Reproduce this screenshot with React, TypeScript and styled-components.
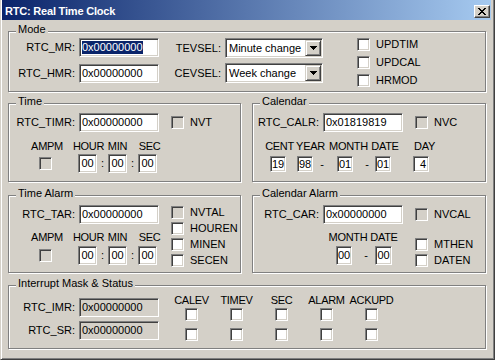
import React from 'react';
import styled, { createGlobalStyle } from 'styled-components';

const FACE = '#D4D0C8';

const GlobalStyle = createGlobalStyle`
  html, body {
    margin: 0;
    padding: 0;
    background: #fff;
  }
  body {
    font-family: "Liberation Sans", Arial, sans-serif;
    font-size: 11px;
    color: #000;
  }
  * {
    box-sizing: border-box;
  }
`;

const Window = styled.div`
  width: 495px;
  height: 360px;
  display: flex;
  flex-direction: column;
  background: ${FACE};
  border-left: 1px solid ${FACE};
  border-right: 1px solid #404040;
  border-bottom: 1px solid #404040;
  box-shadow: inset 1px 0 #fff, inset -1px -1px #808080;
  padding: 0 3px 3px 1px;
`;

const TitleBar = styled.div`
  height: 20px;
  display: flex;
  align-items: flex-start;
  justify-content: space-between;
  padding: 0 1px 0 3px;
  background: linear-gradient(to right, #0a246a, #a6caf0);
`;

const TitleText = styled.span`
  margin-top: 5px;
  line-height: 13px;
  color: #fff;
  font-weight: bold;
  letter-spacing: -0.2px;
`;

const CloseButton = styled.div`
  width: 16px;
  height: 13px;
  margin-top: 5px;
  display: flex;
  align-items: center;
  justify-content: center;
  background: ${FACE};
  border: 1px solid;
  border-color: #fff #404040 #404040 #fff;
  box-shadow: inset -1px -1px #808080;
`;

const Body = styled.div`
  padding: 11px 0 0 6px;
  display: flex;
  flex-direction: column;
`;

const GroupRow = styled.div<{ $mt?: number }>`
  display: grid;
  grid-template-columns: 233px 234px;
  column-gap: 11px;
  margin-top: ${p => p.$mt ?? 0}px;
`;

const Group = styled.div<{ $h: number; $w?: number; $mt?: number }>`
  position: relative;
  width: ${p => (p.$w ? `${p.$w}px` : 'auto')};
  height: ${p => p.$h}px;
  margin-top: ${p => p.$mt ?? 0}px;
  border: 1px solid #808080;
  box-shadow: inset 1px 1px #fff, 1px 1px #fff;
`;

const GroupTitle = styled.span`
  position: absolute;
  top: -9px;
  left: 7px;
  padding: 0 2px;
  line-height: 13px;
  background: ${FACE};
  white-space: nowrap;
`;

const GroupBody = styled.div<{ $pt: number }>`
  padding-top: ${p => p.$pt}px;
  display: flex;
  flex-direction: column;
`;

const Row = styled.div<{ $mt?: number; $ml?: number; $top?: boolean }>`
  display: flex;
  align-items: ${p => (p.$top ? 'flex-start' : 'center')};
  margin-top: ${p => p.$mt ?? 0}px;
  margin-left: ${p => p.$ml ?? 0}px;
`;

const Column = styled.div<{ $w?: number; $ml?: number; $mt?: number; $gap?: number }>`
  display: flex;
  flex-direction: column;
  flex-shrink: 0;
  width: ${p => (p.$w ? `${p.$w}px` : 'auto')};
  margin-left: ${p => p.$ml ?? 0}px;
  margin-top: ${p => p.$mt ?? 0}px;
  gap: ${p => p.$gap ?? 0}px;
`;

const FieldLabel = styled.span<{ $w?: number }>`
  width: ${p => p.$w ?? 66}px;
  margin-right: 4px;
  flex-shrink: 0;
  text-align: right;
  line-height: 13px;
  white-space: nowrap;
`;

type Align = 'left' | 'center' | 'right';

const Edit = styled.div<{ $w: number; $h?: number; $ml?: number; $align?: Align; $disabled?: boolean }>`
  width: ${p => p.$w}px;
  height: ${p => p.$h ?? 19}px;
  margin-left: ${p => p.$ml ?? 0}px;
  flex-shrink: 0;
  display: flex;
  align-items: center;
  justify-content: ${p =>
    p.$align === 'center' ? 'center' : p.$align === 'right' ? 'flex-end' : 'flex-start'};
  padding: ${p => (p.$align === 'center' ? '0' : '0 2px')};
  background: ${p => (p.$disabled ? FACE : '#fff')};
  border: 1px solid;
  border-color: #808080 #fff #fff #808080;
  box-shadow: inset 1px 1px #404040, inset -1px -1px ${FACE};
  line-height: 13px;
  white-space: nowrap;
`;

const Selected = styled.span`
  background: #0a246a;
  color: #fff;
  line-height: 13px;
`;

const Select = styled.div`
  width: 98px;
  height: 20px;
  display: flex;
  align-items: center;
  padding: 1px 1px 1px 3px;
  background: #fff;
  border: 1px solid;
  border-color: #808080 #fff #fff #808080;
  box-shadow: inset 1px 1px #404040, inset -1px -1px ${FACE};
`;

const SelectText = styled.span`
  flex: 1;
  line-height: 13px;
  white-space: nowrap;
`;

const DropButton = styled.span`
  width: 16px;
  height: 16px;
  display: flex;
  align-items: center;
  justify-content: center;
  background: ${FACE};
  border: 1px solid;
  border-color: ${FACE} #404040 #404040 ${FACE};
  box-shadow: inset 1px 1px #fff, inset -1px -1px #808080;
`;

const CheckRow = styled.label<{ $ml?: number }>`
  display: flex;
  align-items: center;
  height: 13px;
  margin-left: ${p => p.$ml ?? 0}px;
  gap: 6px;
  line-height: 13px;
  white-space: nowrap;
`;

const Box = styled.span<{ $disabled?: boolean; $ml?: number }>`
  width: 13px;
  height: 13px;
  flex-shrink: 0;
  margin-left: ${p => p.$ml ?? 0}px;
  background: ${p => (p.$disabled ? FACE : '#fff')};
  border: 1px solid;
  border-color: #808080 #fff #fff #808080;
  box-shadow: inset 1px 1px #404040, inset -1px -1px ${FACE};
`;

const Caption = styled.span<{ $w: number; $ml?: number }>`
  width: ${p => p.$w}px;
  margin-left: ${p => p.$ml ?? 0}px;
  flex-shrink: 0;
  display: flex;
  justify-content: center;
  line-height: 13px;
  letter-spacing: -0.3px;
  white-space: nowrap;
`;

const MaskGrid = styled.div`
  display: grid;
  grid-template-columns: repeat(5, 45px);
  grid-template-rows: 14px 20px 13px;
  justify-items: center;
  align-items: start;
  margin-left: 10px;
`;

const X_ROWS = ['11000011', '01100110', '00111100', '00011000', '00111100', '01100110', '11000011'];

const CloseGlyph = () => {
  let d = '';
  X_ROWS.forEach((row, y) => {
    row.split('').forEach((c, x) => {
      if (c === '1') d += `M${x} ${y}h1v1h-1z`;
    });
  });
  return (
    <svg width="8" height="7" viewBox="0 0 8 7" shapeRendering="crispEdges">
      <path d={d} fill="#000" />
    </svg>
  );
};

const Arrow = () => (
  <svg width="7" height="4" viewBox="0 0 7 4" shapeRendering="crispEdges">
    <path d="M0 0h7v1h-1v1h-1v1h-1v1h-1v-1h-1v-1h-1v-1h-1z" fill="#000" />
  </svg>
);

const Check: React.FC<{ label: string; disabled?: boolean; ml?: number }> = ({ label, disabled, ml }) => (
  <CheckRow $ml={ml}>
    <Box $disabled={disabled} />
    <span>{label}</span>
  </CheckRow>
);

const TimeFields: React.FC<{ capGap: number; inGap: number }> = ({ capGap, inGap }) => (
  <>
    <Row $mt={capGap}>
      <Caption $ml={21} $w={34}>AMPM</Caption>
      <Caption $ml={6} $w={37}>HOUR</Caption>
      <Caption $w={21}>MIN</Caption>
      <Caption $ml={7} $w={29}>SEC</Caption>
    </Row>
    <Row $mt={inGap}>
      <Box $disabled $ml={30} />
      <Edit $ml={26} $w={19} $align="center">00</Edit>
      <Caption $w={11}>:</Caption>
      <Edit $w={19} $align="center">00</Edit>
      <Caption $w={11}>:</Caption>
      <Edit $w={19} $align="center">00</Edit>
    </Row>
  </>
);

const masks = ['CALEV', 'TIMEV', 'SEC', 'ALARM', 'ACKUPD'];

export default function App() {
  return (
    <>
      <GlobalStyle />
      <Window>
        <TitleBar>
          <TitleText>RTC: Real Time Clock</TitleText>
          <CloseButton>
            <CloseGlyph />
          </CloseButton>
        </TitleBar>
        <Body>
          <Group $h={61} $w={478}>
            <GroupTitle>Mode</GroupTitle>
            <GroupBody $pt={6}>
              <Row $top>
                <Column $gap={7}>
                  <Row>
                    <FieldLabel>RTC_MR:</FieldLabel>
                    <Edit $w={80}>
                      <Selected>0x00000000</Selected>
                    </Edit>
                  </Row>
                  <Row>
                    <FieldLabel>RTC_HMR:</FieldLabel>
                    <Edit $w={80}>0x00000000</Edit>
                  </Row>
                </Column>
                <Column $gap={5}>
                  <Row>
                    <FieldLabel $w={62}>TEVSEL:</FieldLabel>
                    <Select>
                      <SelectText>Minute change</SelectText>
                      <DropButton>
                        <Arrow />
                      </DropButton>
                    </Select>
                  </Row>
                  <Row>
                    <FieldLabel $w={62}>CEVSEL:</FieldLabel>
                    <Select>
                      <SelectText>Week change</SelectText>
                      <DropButton>
                        <Arrow />
                      </DropButton>
                    </Select>
                  </Row>
                </Column>
                <Column $ml={34} $gap={5}>
                  <Check label="UPDTIM" />
                  <Check label="UPDCAL" />
                  <Check label="HRMOD" />
                </Column>
              </Row>
            </GroupBody>
          </Group>

          <GroupRow $mt={11}>
            <Group $h={79}>
              <GroupTitle>Time</GroupTitle>
              <GroupBody $pt={9}>
                <Row>
                  <FieldLabel>RTC_TIMR:</FieldLabel>
                  <Edit $w={80}>0x00000000</Edit>
                  <Check label="NVT" disabled ml={12} />
                </Row>
                <TimeFields capGap={8} inGap={1} />
              </GroupBody>
            </Group>
            <Group $h={79}>
              <GroupTitle>Calendar</GroupTitle>
              <GroupBody $pt={9}>
                <Row>
                  <FieldLabel>RTC_CALR:</FieldLabel>
                  <Edit $w={80}>0x01819819</Edit>
                  <Check label="NVC" disabled ml={12} />
                </Row>
                <Row $mt={8}>
                  <Caption $ml={11} $w={31}>CENT</Caption>
                  <Caption $w={31}>YEAR</Caption>
                  <Caption $w={45}>MONTH</Caption>
                  <Caption $w={28}>DATE</Caption>
                  <Caption $ml={14} $w={23}>DAY</Caption>
                </Row>
                <Row $mt={3}>
                  <Edit $ml={17} $w={16} $h={16} $align="center">19</Edit>
                  <Edit $ml={11} $w={16} $h={16} $align="center">98</Edit>
                  <Caption $ml={7} $w={4}>-</Caption>
                  <Edit $ml={13} $w={16} $h={16} $align="center">01</Edit>
                  <Caption $ml={12} $w={4}>-</Caption>
                  <Edit $ml={6} $w={16} $h={16} $align="center">01</Edit>
                  <Edit $ml={22} $w={16} $h={16} $align="right">4</Edit>
                </Row>
              </GroupBody>
            </Group>
          </GroupRow>

          <GroupRow $mt={13}>
            <Group $h={78}>
              <GroupTitle>Time Alarm</GroupTitle>
              <GroupBody $pt={9}>
                <Row $top>
                  <Column $w={150}>
                    <Row>
                      <FieldLabel>RTC_TAR:</FieldLabel>
                      <Edit $w={80}>0x00000000</Edit>
                    </Row>
                    <TimeFields capGap={7} inGap={2} />
                  </Column>
                  <Column $ml={12} $mt={1} $gap={3}>
                    <Check label="NVTAL" disabled />
                    <Check label="HOUREN" />
                    <Check label="MINEN" />
                    <Check label="SECEN" />
                  </Column>
                </Row>
              </GroupBody>
            </Group>
            <Group $h={78}>
              <GroupTitle>Calendar Alarm</GroupTitle>
              <GroupBody $pt={9}>
                <Row>
                  <FieldLabel>RTC_CAR:</FieldLabel>
                  <Edit $w={80}>0x00000000</Edit>
                  <Check label="NVCAL" disabled ml={12} />
                </Row>
                <Row $mt={7} $top>
                  <Column $w={150}>
                    <Row>
                      <Caption $ml={73} $w={44}>MONTH</Caption>
                      <Caption $w={28}>DATE</Caption>
                    </Row>
                    <Row $mt={2}>
                      <Edit $ml={83} $w={16} $align="center">00</Edit>
                      <Caption $ml={12} $w={4}>-</Caption>
                      <Edit $ml={7} $w={17} $align="center">00</Edit>
                    </Row>
                  </Column>
                  <Column $ml={12} $mt={7} $gap={3}>
                    <Check label="MTHEN" />
                    <Check label="DATEN" />
                  </Column>
                </Row>
              </GroupBody>
            </Group>
          </GroupRow>

          <Group $h={64} $w={478} $mt={12}>
            <GroupTitle>Interrupt Mask &amp; Status</GroupTitle>
            <GroupBody $pt={8}>
              <Row $top>
                <Column $w={150} $mt={4} $gap={4}>
                  <Row>
                    <FieldLabel>RTC_IMR:</FieldLabel>
                    <Edit $w={80} $disabled>0x00000000</Edit>
                  </Row>
                  <Row>
                    <FieldLabel>RTC_SR:</FieldLabel>
                    <Edit $w={80} $disabled>0x00000000</Edit>
                  </Row>
                </Column>
                <MaskGrid>
                  {masks.map(m => (
                    <Caption key={m} $w={45}>{m}</Caption>
                  ))}
                  {masks.map(m => (
                    <Box key={`a-${m}`} />
                  ))}
                  {masks.map(m => (
                    <Box key={`b-${m}`} />
                  ))}
                </MaskGrid>
              </Row>
            </GroupBody>
          </Group>
        </Body>
      </Window>
    </>
  );
}
